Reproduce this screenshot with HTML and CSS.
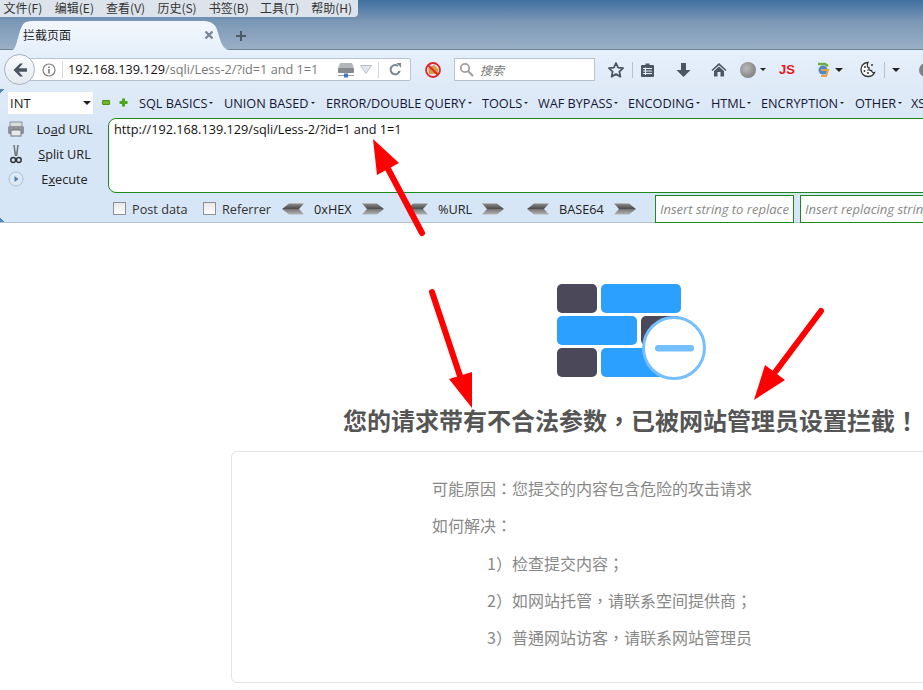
FILE: index.html
```html
<!DOCTYPE html>
<html lang="zh-CN">
<head>
    <meta charset="UTF-8">
    <title>拦截页面</title>
    <link rel="stylesheet" href="styles.css">
</head>
<body>
<div class="screen">
    <header class="titlebar">
        <nav class="menubar">
            <span>文件(F)</span><span>编辑(E)</span><span>查看(V)</span><span>历史(S)</span><span>书签(B)</span><span>工具(T)</span><span>帮助(H)</span>
        </nav>
        <div class="tabstrip">
            <div class="tab">
                <span class="tab-title">拦截页面</span>
                <svg class="tab-close" width="10" height="10" viewBox="0 0 10 10"><path d="M1.5 1.5l7 7M8.5 1.5l-7 7" stroke="#7b8794" stroke-width="2.4"/></svg>
            </div>
            <svg class="tab-new" width="12" height="12" viewBox="0 0 12 12"><path d="M6 1v10M1 6h10" stroke="#4d5a68" stroke-width="2"/></svg>
        </div>
    </header>

    <div class="navbar">
        <div class="back">
            <svg width="16" height="16" viewBox="0 0 16 16"><path d="M8 1.5L1.5 8 8 14.5h3L6.8 9.7H15V6.3H6.8L11 1.5z" fill="#4b5663"/></svg>
        </div>
        <div class="urlbar">
            <svg class="info" width="14" height="14" viewBox="0 0 14 14"><circle cx="7" cy="7" r="6" fill="none" stroke="#808080" stroke-width="1.2"/><path d="M7 6v4.4M7 3.4v1.5" stroke="#707070" stroke-width="1.5"/></svg>
            <span class="url"><span class="url-host">192.168.139.129</span>/sqli/Less-2/?id=1 and 1=1</span>
            <svg class="server" width="18" height="16" viewBox="0 0 18 16"><path d="M3 1h12l2 5H1z" fill="#b3b7bb"/><rect x="1" y="6" width="16" height="5" rx="1" fill="#85898e"/><path d="M1 13.5h16" stroke="#9aa0a6"/><rect x="7" y="11.5" width="4" height="4" fill="#3d78c4"/></svg>
            <svg class="drop" width="12" height="9" viewBox="0 0 12 9"><path d="M.5.5h11L6 8.5z" fill="#e3e7ec" stroke="#b9c0c8"/></svg>
            <span class="url-sep"></span>
            <svg class="reload" width="13" height="13" viewBox="0 0 14 14"><path d="M11.5 8.5A5 5 0 1 1 9.5 3" fill="none" stroke="#7d8894" stroke-width="2.2"/><path d="M8 0h5v5z" fill="#7d8894"/></svg>
        </div>
        <svg class="noscript" width="18" height="18" viewBox="0 0 18 18"><path d="M4 7l6-3 4 4v5H5z" fill="#d99a3c"/><circle cx="9" cy="9" r="7" fill="none" stroke="#e0242c" stroke-width="1.8"/><path d="M4 4l10 10" stroke="#e0242c" stroke-width="1.8"/></svg>
        <div class="searchbar">
            <svg width="15" height="15" viewBox="0 0 15 15"><circle cx="6" cy="6" r="4.2" fill="none" stroke="#a0a0a0" stroke-width="1.8"/><path d="M9 9l5 5" stroke="#a0a0a0" stroke-width="2.2"/></svg>
            <span class="search-hint">搜索</span>
        </div>
        <div class="tools">
            <svg class="t-star" width="18" height="18" viewBox="0 0 18 18"><path d="M9 2l2.100 4.600 5 .6-3.700 3.400 1 5L9 13.100 4.600 15.600l1-5L1.900 7.200l5-.6z" fill="none" stroke="#4b5663" stroke-width="1.8" stroke-linejoin="round"/></svg>
            <span class="t-sep"></span>
            <svg class="t-list" width="15" height="16" viewBox="0 0 15 16"><path d="M2 3h3.500V1.500h4V3H13a1 1 0 0 1 1 1v10a1 1 0 0 1-1 1H2a1 1 0 0 1-1-1V4a1 1 0 0 1 1-1z" fill="#4b5663"/><path d="M3 6.500h9M3 9h9M3 11.500h9M5.500 5.500v7.500" stroke="#e8eff8"/></svg>
            <svg class="t-down" width="15" height="16" viewBox="0 0 15 16"><path d="M5 1h5v7h4.500l-7 7-7-7H5z" fill="#4b5663"/></svg>
            <svg class="t-home" width="16" height="15" viewBox="0 0 16 15"><path d="M8 1L.5 8l1 1L8 3.200 14.500 9l1-1z" fill="#4b5663"/><path d="M3 9l5-4.500L13 9v5.500H9.500V10h-3v4.500H3z" fill="#4b5663"/></svg>
            <span class="t-moon"></span>
            <span class="caret small"></span>
            <span class="t-js">JS</span>
            <svg class="t-sync" width="16" height="18" viewBox="0 0 16 18"><path d="M3 3h7L13 5" fill="none" stroke="#6fae3c" stroke-width="2.5"/><circle cx="8" cy="9" r="4.500" fill="#4f86c6"/><path d="M6 9h7l-2 6H6" fill="none" stroke="#e2a33a" stroke-width="2"/></svg>
            <span class="caret sync-caret"></span>
            <svg class="t-cookie" width="17" height="17" viewBox="0 0 17 17"><path d="M8 1.500C4 1.500 1 4.500 1 8.500s3 7 7 7c3 0 5.500-1.500 6.500-4-1.500.5-3-.5-3-2-1.500.5-3-1-2.500-2.500C7.500 7 6.500 4 8 1.500z" fill="#fff" stroke="#333" stroke-width="1.3"/><circle cx="5" cy="6" r="1" fill="#333"/><circle cx="4.500" cy="10" r="1" fill="#333"/><circle cx="8" cy="12" r="1" fill="#333"/><circle cx="8" cy="9" r=".8" fill="#333"/><circle cx="12" cy="4" r="1" fill="#333"/></svg>
            <span class="t-sep wide"></span>
            <span class="caret last-caret"></span>
            <span class="t-cut"></span>
        </div>
    </div>

    <section class="hackbar">
        <div class="hb-menu">
            <div class="hb-select"><span>INT</span><span class="caret"></span></div>
            <span class="hb-minus"></span>
            <svg class="hb-plus" width="9" height="9" viewBox="0 0 9 9"><path d="M4.500.5v8M.5 4.500h8" stroke="#4aa61c" stroke-width="3"/></svg>
            <span class="hb-item i1">SQL BASICS</span>
            <span class="hb-item i2">UNION BASED</span>
            <span class="hb-item i3">ERROR/DOUBLE QUERY</span>
            <span class="hb-item i4">TOOLS</span>
            <span class="hb-item i5">WAF BYPASS</span>
            <span class="hb-item i6">ENCODING</span>
            <span class="hb-item i7">HTML</span>
            <span class="hb-item i8">ENCRYPTION</span>
            <span class="hb-item i9">OTHER</span>
            <span class="hb-item i10">XSS</span>
        </div>
        <div class="hb-main">
            <div class="hb-actions">
                <div class="hb-action">
                    <svg width="18" height="16" viewBox="0 0 18 16"><rect x="3" y="1" width="12" height="5" fill="#d8dcdf" stroke="#8a9096"/><rect x="1" y="5" width="16" height="8" rx="1.500" fill="#8e9499"/><rect x="4" y="9" width="10" height="6" fill="#e8eaec" stroke="#6e747a"/></svg>
                    <span>Lo<u>a</u>d URL</span>
                </div>
                <div class="hb-action">
                    <svg width="12" height="20" viewBox="0 0 12 20"><path d="M4 1l1.500 11M8 1L6.500 12" stroke="#6b7178" stroke-width="1.5" fill="none"/><circle cx="3.200" cy="16" r="2.400" fill="none" stroke="#30363c" stroke-width="1.5"/><circle cx="8.800" cy="16" r="2.400" fill="none" stroke="#30363c" stroke-width="1.5"/></svg>
                    <span><u>S</u>plit URL</span>
                </div>
                <div class="hb-action">
                    <svg width="16" height="16" viewBox="0 0 16 16"><circle cx="8" cy="8" r="7" fill="#dfe9f5" stroke="#a9bfd8"/><path d="M6.500 5l4 3-4 3z" fill="#4c7fb5"/></svg>
                    <span>E<u>x</u>ecute</span>
                </div>
            </div>
            <div class="hb-url">http://192.168.139.129/sqli/Less-2/?id=1 and 1=1</div>
        </div>
        <div class="hb-bottom">
            <label class="hb-check c1"><span class="box"></span>Post data</label>
            <label class="hb-check c2"><span class="box"></span>Referrer</label>
            <div class="hb-codec c3">
                <svg class="chev" width="22" height="12" viewBox="0 0 22 12"><use href="#chev-left"/></svg>
                <span class="codec-name">0xHEX</span>
                <svg class="chev" width="22" height="12" viewBox="0 0 22 12"><use href="#chev-right"/></svg>
            </div>
            <div class="hb-codec c4">
                <svg class="chev" width="22" height="12" viewBox="0 0 22 12"><use href="#chev-left"/></svg>
                <span class="codec-name">%URL</span>
                <svg class="chev" width="22" height="12" viewBox="0 0 22 12"><use href="#chev-right"/></svg>
            </div>
            <div class="hb-codec c5">
                <svg class="chev" width="22" height="12" viewBox="0 0 22 12"><use href="#chev-left"/></svg>
                <span class="codec-name">BASE64</span>
                <svg class="chev" width="22" height="12" viewBox="0 0 22 12"><use href="#chev-right"/></svg>
            </div>
            <div class="hb-input first">Insert string to replace</div>
            <div class="hb-input second">Insert replacing string</div>
        </div>
    </section>

    <main class="page">
        <svg class="wall" width="170" height="100" viewBox="0 0 170 100">
            <rect x="0" y="0" width="40" height="29" rx="5" fill="#4a4859"/>
            <rect x="44" y="0" width="80" height="29" rx="5" fill="#2ba0ff"/>
            <rect x="0" y="32" width="80" height="29" rx="5" fill="#2ba0ff"/>
            <rect x="84" y="32" width="40" height="29" rx="5" fill="#4a4859"/>
            <rect x="0" y="64" width="40" height="29" rx="5" fill="#4a4859"/>
            <rect x="44" y="64" width="80" height="29" rx="5" fill="#2ba0ff"/>
            <circle cx="117" cy="64" r="30.5" fill="#fff" stroke="#74bfff" stroke-width="3"/>
            <rect x="98" y="61" width="39" height="6.500" rx="3.200" fill="#74bfff"/>
        </svg>
        <h1 class="notice" lang="zh-TW">您的请求带有不合法参数，已被网站管理员设置拦截！</h1>
        <div class="card" lang="zh-TW">
            <p>可能原因：您提交的内容包含危险的攻击请求</p>
            <p>如何解决：</p>
            <p class="step">1）检查提交内容；</p>
            <p class="step">2）如网站托管，请联系空间提供商；</p>
            <p class="step">3）普通网站访客，请联系网站管理员</p>
        </div>
    </main>

    <svg class="marks" width="923" height="690" viewBox="0 0 923 690">
        <defs>
            <linearGradient id="chev-fill" x1="0" y1="0" x2="0" y2="1">
                <stop offset="0" stop-color="#8d8d8d"/><stop offset=".45" stop-color="#4e4e4e"/><stop offset=".55" stop-color="#7a7a7a"/><stop offset="1" stop-color="#b4b4b4"/>
            </linearGradient>
            <path id="chev-left" d="M0 6L7 .5h15L17 6l5 5.500H7z" fill="url(#chev-fill)"/>
            <path id="chev-right" d="M0 .5h15L22 6l-7 5.500H0L5 6z" fill="url(#chev-fill)"/>
        </defs>
        <path d="M422 233L386 165" stroke="#f00" stroke-width="6" stroke-linecap="round"/>
        <path d="M373 139L377 175L399 163z" fill="#f00"/>
        <path d="M432 292L460 376" stroke="#f00" stroke-width="6" stroke-linecap="round"/>
        <path d="M472 408L449 379L472 372z" fill="#f00"/>
        <path d="M821 311L776 371" stroke="#f00" stroke-width="6" stroke-linecap="round"/>
        <path d="M754 400L765 365L785 380z" fill="#f00"/>
    </svg>
</div>
</body>
</html>
```

FILE: styles.css
```css
html, body {
    margin: 0;
    background: #fff;
}
.screen {
    position: relative;
    width: 923px;
    height: 690px;
    overflow: hidden;
    font-family: "Noto Sans CJK SC", "Liberation Sans", sans-serif;
    color: #222;
}
.titlebar {
    height: 50px;
    background: linear-gradient(#41709f, #7c98b6 45%, #99afc6 100%);
    border-bottom: 1px solid #6f8296;
    box-sizing: border-box;
}
.menubar {
    display: flex;
    gap: 11px;
    width: 354.5px;
    height: 17px;
    padding-left: 3.5px;
    background: #dde3ea;
    border-bottom-right-radius: 4px;
    font-size: 12px;
    line-height: 15px;
    color: #333;
}
.menubar span {
    flex: none;
    width: 40.3px;
    white-space: nowrap;
}
.tabstrip {
    display: flex;
    align-items: flex-end;
    height: 33px;
    padding-left: 12px;
}
.tab {
    display: flex;
    align-items: center;
    justify-content: space-between;
    box-sizing: border-box;
    flex: none;
    width: 218px;
    height: 29px;
    padding: 0 16px 2px 11px;
    background: linear-gradient(#f2f7fc, #e6f0fb);
    clip-path: path("M0 29 C6 29 6 4 14 1 Q17 0 22 0 H192 Q200 0 204 6 C208 16 209 29 218 29 Z");
    font-size: 12px;
}
.tab-new {
    flex: none;
    margin: 0 0 8px 5px;
}
.navbar {
    display: flex;
    align-items: center;
    height: 39px;
    background: linear-gradient(#e6f0fb, #dfeaf7);
}
.navbar > * {
    flex: none;
}
.back {
    display: flex;
    align-items: center;
    justify-content: center;
    box-sizing: border-box;
    width: 31px;
    height: 31px;
    margin-left: 4px;
    background: linear-gradient(#fafcfe, #e4eaf1);
    border: 1px solid #a6b0bc;
    border-radius: 50%;
    position: relative;
}
.urlbar {
    display: flex;
    align-items: center;
    box-sizing: border-box;
    width: 381px;
    height: 23px;
    margin-left: -5px;
    padding-left: 11px;
    background: #fff;
    border: 1px solid #b5c3d3;
    border-radius: 0 2px 2px 0;
}
.urlbar > * {
    flex: none;
}
.url {
    margin-left: 6px;
    padding-left: 5px;
    border-left: 1px solid #d5d9de;
    width: 266px;
    font-family: "Open Sans", "Liberation Sans", sans-serif;
    font-size: 12.7px;
    line-height: 17px;
    color: #777;
    white-space: nowrap;
}
.url-host {
    color: #111;
}
.server {
    margin-left: 3px;
}
.drop {
    margin-left: 5px;
}
.url-sep {
    width: 1px;
    height: 16px;
    margin-left: 6px;
    background: #d5d9de;
}
.reload {
    margin-left: 10px;
}
.noscript {
    margin-left: 13px;
}
.searchbar {
    display: flex;
    align-items: center;
    gap: 6px;
    box-sizing: border-box;
    width: 141px;
    height: 23px;
    margin-left: 12px;
    padding-left: 4px;
    background: #fff;
    border: 1px solid #b5c3d3;
}
.search-hint {
    font-size: 12px;
    font-style: italic;
    color: #777;
}
.tools {
    display: flex;
    align-items: center;
    margin-left: 12px;
}
.tools > * {
    flex: none;
}
.t-sep {
    width: 1px;
    height: 16px;
    margin-left: 7px;
    background: #b7c1cc;
}
.t-list {
    margin-left: 7px;
}
.t-down {
    margin-left: 21px;
}
.t-home {
    margin-left: 20px;
}
.t-moon {
    width: 16px;
    height: 16px;
    margin-left: 13px;
    border-radius: 50%;
    background: radial-gradient(circle at 40% 40%, #bbb, #6e6e6e);
}
.caret {
    width: 0;
    height: 0;
    border: 4px solid transparent;
    border-top: 4px solid #222;
    border-bottom: 0;
}
.caret.small {
    border-width: 3px 3px 0;
    margin-left: 4px;
}
.t-js {
    margin-left: 13px;
    font-family: "Liberation Sans", sans-serif;
    font-size: 13px;
    font-weight: bold;
    color: #e8141c;
}
.t-sync {
    margin-left: 20px;
}
.sync-caret {
    margin-left: 4px;
}
.t-cookie {
    margin-left: 17px;
}
.last-caret {
    margin-left: 7px;
}
.t-cut {
    width: 14px;
    height: 14px;
    margin-left: 19px;
    border-radius: 50%;
    background: #7d8488;
}
.hackbar {
    box-sizing: border-box;
    height: 134px;
    background:
        linear-gradient(135deg, #4f88c0 3px, transparent 3px),
        linear-gradient(45deg, #4f88c0 3px, transparent 3px),
        linear-gradient(#dfeaf7, #d7e6f6 30%);
    border-bottom: 1px solid #b4c1d0;
    font-family: "Open Sans", "Liberation Sans", sans-serif;
    font-size: 12.7px;
}
.hb-menu {
    display: flex;
    align-items: center;
    box-sizing: border-box;
    height: 29px;
    padding: 0 0 2px 8px;
    white-space: nowrap;
}
.hb-menu > * {
    flex: none;
}
.hb-select {
    display: flex;
    align-items: center;
    justify-content: space-between;
    box-sizing: border-box;
    width: 85px;
    height: 22px;
    padding: 0 2px;
    background: #fff;
    font-size: 13px;
}
.hb-minus {
    box-sizing: content-box;
    width: 6px;
    height: 3px;
    margin-left: 9px;
    background: #6fb82a;
    border: 1px solid #4c8f14;
    border-radius: 1px;
}
.hb-plus {
    margin-left: 9px;
}
.hb-item {
    display: flex;
    align-items: center;
    color: #161636;
}
.hb-item::after {
    content: "";
    margin-left: 2px;
    border: 2px solid transparent;
    border-top: 2px solid #222;
    border-bottom: 0;
}
.i1 { margin-left: 11px; width: 85px; }
.i2 { width: 102px; }
.i3 { width: 156px; }
.i4 { width: 56px; }
.i5 { width: 90px; }
.i6 { width: 83px; }
.i7 { width: 50px; }
.i8 { width: 94px; }
.i9 { width: 56px; }
.i10 { width: 30px; }
.hb-main {
    display: flex;
    height: 74px;
}
.hb-actions {
    display: flex;
    flex-direction: column;
    flex: none;
    width: 108px;
    margin-top: -2px;
}
.hb-action {
    display: grid;
    grid-template-columns: 32px 1fr;
    align-items: center;
    justify-items: center;
    box-sizing: border-box;
    height: 26px;
    padding-right: 11px;
    color: #222;
}
.hb-url {
    box-sizing: border-box;
    flex: none;
    width: 900px;
    height: 75px;
    padding: 1px 5px;
    background: #fff;
    border: 1px solid #1b8a1b;
    border-radius: 8px;
    line-height: 18px;
    color: #111;
    white-space: nowrap;
}
.hb-bottom {
    display: flex;
    align-items: center;
    box-sizing: border-box;
    height: 31px;
    padding-top: 2px;
    white-space: nowrap;
}
.hb-bottom > * {
    flex: none;
}
.hb-check {
    display: flex;
    align-items: center;
    gap: 6px;
    color: #333;
}
.box {
    width: 11px;
    height: 11px;
    background: linear-gradient(#eaeaea, #fdfdfd);
    border: 1px solid #8e8f8f;
}
.c1 { margin-left: 113px; width: 90px; }
.c2 { width: 79px; }
.c3 { width: 124px; }
.c4 { width: 121px; }
.c5 { width: 128px; }
.hb-codec {
    display: flex;
    align-items: center;
}
.chev {
    flex: none;
}
.codec-name {
    margin: 0 10px;
    color: #222;
}
.hb-input {
    align-self: flex-start;
    box-sizing: border-box;
    height: 28px;
    margin-top: 1px;
    padding-left: 4px;
    background: #fff;
    border: 1px solid #1b8a1b;
    font-size: 13px;
    font-style: italic;
    line-height: 26px;
    color: #888;
    overflow: hidden;
}
.hb-input.first {
    width: 139px;
}
.hb-input.second {
    width: 200px;
    margin-left: 6px;
}
.page {
    display: flex;
    flex-direction: column;
    align-items: center;
    width: 800px;
    margin-left: 231px;
    padding-top: 61px;
}
.wall {
    display: block;
    align-self: flex-start;
    margin-left: 326px;
}
.notice {
    margin: 16px 0 0;
    font-family: "Noto Sans CJK TC", sans-serif;
    font-size: 24px;
    font-weight: bold;
    line-height: 40px;
    color: #555;
    white-space: nowrap;
}
.card {
    box-sizing: border-box;
    flex: none;
    width: 800px;
    height: 232px;
    margin-top: 11px;
    padding: 18px 0 0 200px;
    border: 1px solid #e3e3e3;
    border-radius: 6px;
    font-family: "Noto Sans CJK TC", sans-serif;
    font-size: 16px;
    color: #888;
}
.card p {
    margin: 0;
    height: 37.25px;
    line-height: 37px;
    white-space: nowrap;
}
.card .step {
    padding-left: 55px;
}
.marks {
    position: absolute;
    left: 0;
    top: 0;
    pointer-events: none;
}
```
